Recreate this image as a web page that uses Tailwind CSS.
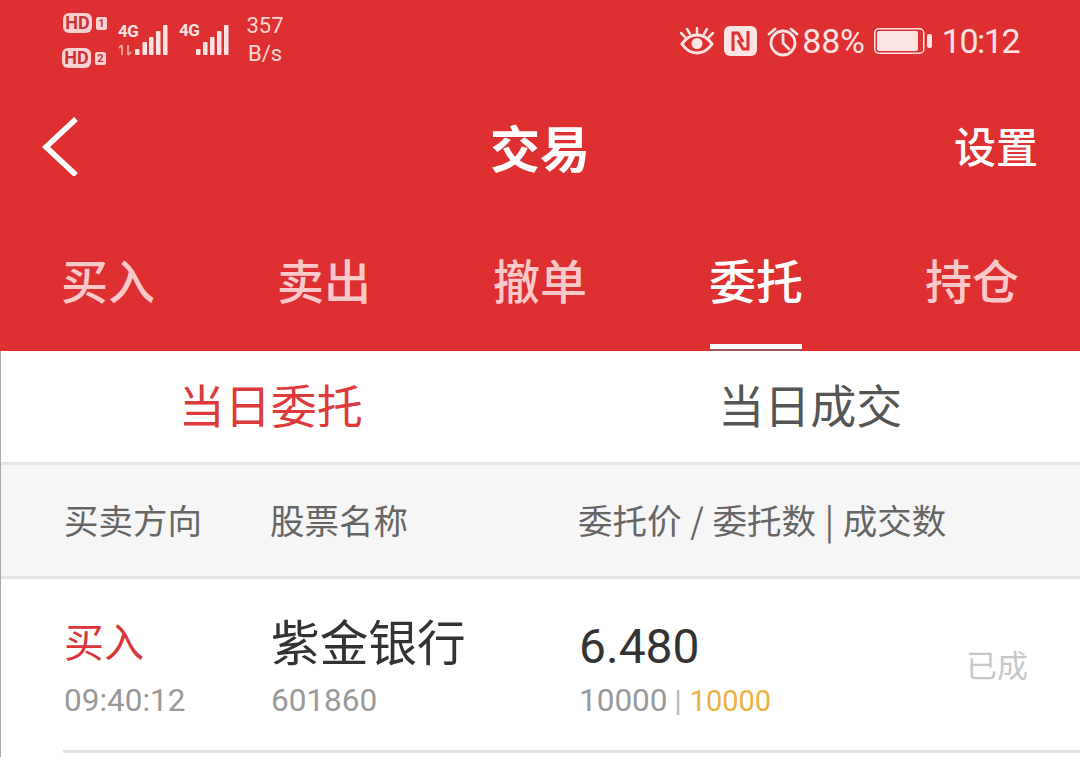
<!DOCTYPE html>
<html lang="zh-CN">
<head>
  <meta charset="UTF-8" />
  <meta name="viewport" content="width=device-width, initial-scale=1.0"/>
  <title>交易</title>
  <script src="https://cdn.jsdelivr.net/npm/@tailwindcss/browser@4"></script>
</head>
<body class="bg-white font-['Noto_Sans_CJK_SC','Noto_Sans',sans-serif]">
  <div class="w-[1080px] h-[757px] overflow-hidden flex flex-col">

    <!-- Red header -->
    <header class="h-[351px] bg-[#de3031] text-white flex flex-col shrink-0">

      <!-- Status bar -->
      <div class="h-[84px] flex items-start justify-between pl-[62px] pr-[61px]">
        <div class="flex items-start pt-[13px] text-[#fde3e3]">
          <div class="flex flex-col gap-[15px] w-[56px]">
            <div class="flex items-center gap-[4px] h-[20px] pl-[1px]">
              <span class="w-[29px] h-[20px] rounded-[6px] bg-[#fad0d0] text-[#c9343a] font-['Roboto'] font-bold text-[18px] leading-[20px] text-center">HD</span>
              <span class="w-[11px] h-[13px] rounded-[2px] bg-[#fad0d0] text-[#c9343a] font-['Roboto'] font-bold text-[11px] leading-[13px] text-center">1</span>
            </div>
            <div class="flex items-center gap-[4px] h-[20px]">
              <span class="w-[29px] h-[20px] rounded-[6px] bg-[#fad0d0] text-[#c9343a] font-['Roboto'] font-bold text-[18px] leading-[20px] text-center">HD</span>
              <span class="w-[11px] h-[13px] rounded-[2px] bg-[#fad0d0] text-[#c9343a] font-['Roboto'] font-bold text-[11px] leading-[13px] text-center">2</span>
            </div>
          </div>
          <div class="relative w-[61px] h-[42px]">
            <span class="absolute left-0 top-[9px] font-['Roboto'] font-bold text-[17px] leading-[18px] tracking-[-0.5px]">4G</span>
            <svg class="absolute left-0 top-[12px]" width="52" height="32" viewBox="0 0 52 32" fill="#fde3e3">
              <path d="M4 20v10M1 23l3-3M10 20v10M10 30l3-3" stroke="#f09a9a" stroke-width="2" fill="none"/>
              <rect x="17" y="24" width="4.500" height="6" rx="1"/>
              <rect x="24.500" y="17" width="4.500" height="13" rx="1"/>
              <rect x="31" y="12" width="4.500" height="18" rx="1"/>
              <rect x="38" y="6" width="4.500" height="24" rx="1"/>
              <rect x="45" y="0" width="4.500" height="30" rx="1"/>
            </svg>
          </div>
          <div class="relative w-[67px] h-[42px]">
            <span class="absolute left-0 top-[8px] font-['Roboto'] font-bold text-[17px] leading-[18px] tracking-[-0.5px]">4G</span>
            <svg class="absolute left-0 top-[12px]" width="52" height="32" viewBox="0 0 52 32" fill="#fde3e3">
              <rect x="17" y="24" width="4.500" height="6" rx="1"/>
              <rect x="24" y="17" width="4.500" height="13" rx="1"/>
              <rect x="31" y="12" width="4.500" height="18" rx="1"/>
              <rect x="38" y="6" width="4.500" height="24" rx="1"/>
              <rect x="45" y="0" width="4.500" height="30" rx="1"/>
            </svg>
          </div>
          <div class="w-[38px] -mt-[1px] font-['Roboto'] text-[22px] leading-[28px] text-center text-[#fbd5d5]">357<br/>B/s</div>
        </div>

        <div class="flex items-center h-[34px] mt-[24px] text-[#fde3e3]">
          <svg class="mr-[10px]" width="34" height="28" viewBox="0 0 34 28" fill="none" stroke="#fde3e3" stroke-width="3">
            <path d="M2 17c4-6 9-9 15-9s11 3 15 9c-4 6-9 9-15 9s-11-3-15-9z"/>
            <circle cx="17" cy="16.500" r="5.500" fill="#fde3e3" stroke="none"/>
            <path d="M17 1v5M7 2l3 5M27 2l-3 5M1 6l4 4M33 6l-4 4" stroke-linecap="round" stroke-width="2.500"/>
          </svg>
          <svg class="mr-[10px]" width="33" height="30" viewBox="0 0 33 30">
            <rect width="33" height="30" rx="6" fill="#fde3e3"/>
            <path d="M9 25V7h5l5 9M24 5v18h-5l-5-9" fill="none" stroke="#de3031" stroke-width="3"/>
          </svg>
          <svg class="mr-[3px]" width="32" height="31" viewBox="0 0 32 31" fill="none" stroke="#fde3e3" stroke-width="2.800">
            <circle cx="16" cy="17" r="12"/>
            <path d="M16 9v8l6 6M2 8l6-5M30 8l-6-5" stroke-linecap="round"/>
          </svg>
          <span class="font-['Roboto'] text-[34px] leading-[34px] tracking-[-0.2px] mr-[9px]">88%</span>
          <svg class="mr-[10px]" width="58" height="26" viewBox="0 0 58 26">
            <rect x="0.750" y="0.750" width="49" height="24.500" rx="4" fill="none" stroke="#fde3e3" stroke-width="1.500"/>
            <rect x="3" y="3" width="41" height="20" rx="2" fill="#fde3e3"/>
            <rect x="53" y="6" width="5" height="14" rx="2" fill="#fde3e3"/>
          </svg>
          <span class="font-['Roboto'] text-[34px] leading-[34px] tracking-[-1.500px]">10:12</span>
        </div>
      </div>

      <!-- Title row -->
      <div class="relative h-[132px] flex items-center justify-center">
        <svg class="absolute left-[41px] top-[32px]" width="38" height="60" viewBox="0 0 38 60" fill="none" stroke="white" stroke-width="5.500">
          <path d="M35 3L5 31l30 28"/>
        </svg>
        <span class="text-[50px] leading-[64px] font-bold mb-[8px]">交易</span>
        <span class="absolute right-[42px] top-[31px] text-[42px] leading-[60px] font-medium">设置</span>
      </div>

      <!-- Trade tabs -->
      <nav class="grid grid-cols-5 flex-1 text-[47px] text-[#fbc9c9] font-medium">
        <div class="flex justify-center pt-[30px]"><span class="leading-[66px]">买入</span></div>
        <div class="flex justify-center pt-[30px]"><span class="leading-[66px]">卖出</span></div>
        <div class="flex justify-center pt-[30px]"><span class="leading-[66px]">撤单</span></div>
        <div class="flex justify-center pt-[30px]">
          <span class="flex justify-center whitespace-nowrap w-[92px] h-[103px] leading-[66px] text-white border-b-[5px] border-white shadow-[0_2px_0_#9b5555]">委托</span>
        </div>
        <div class="flex justify-center pt-[30px]"><span class="leading-[66px]">持仓</span></div>
      </nav>
    </header>

    <main class="flex-1 border-l border-[#a9a9a9]">
      <!-- Sub tabs -->
      <div class="grid grid-cols-2 h-[114px] border-b-[3px] border-[#e5e5e5] text-[46px]">
        <div class="text-center text-[#de3a3c] leading-[104px]">当日委托</div>
        <div class="text-center text-[#555555] leading-[104px]">当日成交</div>
      </div>

      <!-- Column headings -->
      <div class="flex items-center h-[114px] pl-[63px] pb-[2px] bg-[#f6f6f6] border-b-[3px] border-[#e3e3e3] text-[34.500px] text-[#666666]">
        <div class="w-[206px]">买卖方向</div>
        <div class="w-[308px]">股票名称</div>
        <div class="[word-spacing:1px]">委托价 / 委托数 | 成交数</div>
      </div>

      <!-- Order row -->
      <div class="ml-[62px] h-[174px] flex items-center border-b-[3px] border-[#e3e3e3]">
        <div class="w-[208px] pl-[1px] pt-[2px]">
          <div class="text-[40px] leading-[56px] text-[#d9363a]">买入</div>
          <div class="mt-[14px] font-['Roboto'] text-[31.500px] leading-[38px] text-[#999999]">09:40:12</div>
        </div>
        <div class="w-[308px] pt-[2px]">
          <div class="text-[48.700px] leading-[56px] text-[#333333]">紫金银行</div>
          <div class="mt-[14px] font-['Roboto'] text-[31.500px] leading-[38px] text-[#999999]">601860</div>
        </div>
        <div class="w-[387px] pt-[2px]">
          <div class="font-['Roboto'] text-[48px] leading-[69px] text-[#333333]">6.480</div>
          <div class="mt-[1px] flex items-baseline font-['Roboto'] leading-[38px] text-[#999999]">
            <span class="text-[31.500px]">10000</span>
            <span class="ml-[7px] text-[29px] text-[#bbbbbb]">|</span>
            <span class="ml-[8px] text-[29px] text-[#e9b33f]">10000</span>
          </div>
        </div>
        <div class="text-[31px] text-[#c8c8c8]">已成</div>
      </div>
    </main>
  </div>
</body>
</html>
